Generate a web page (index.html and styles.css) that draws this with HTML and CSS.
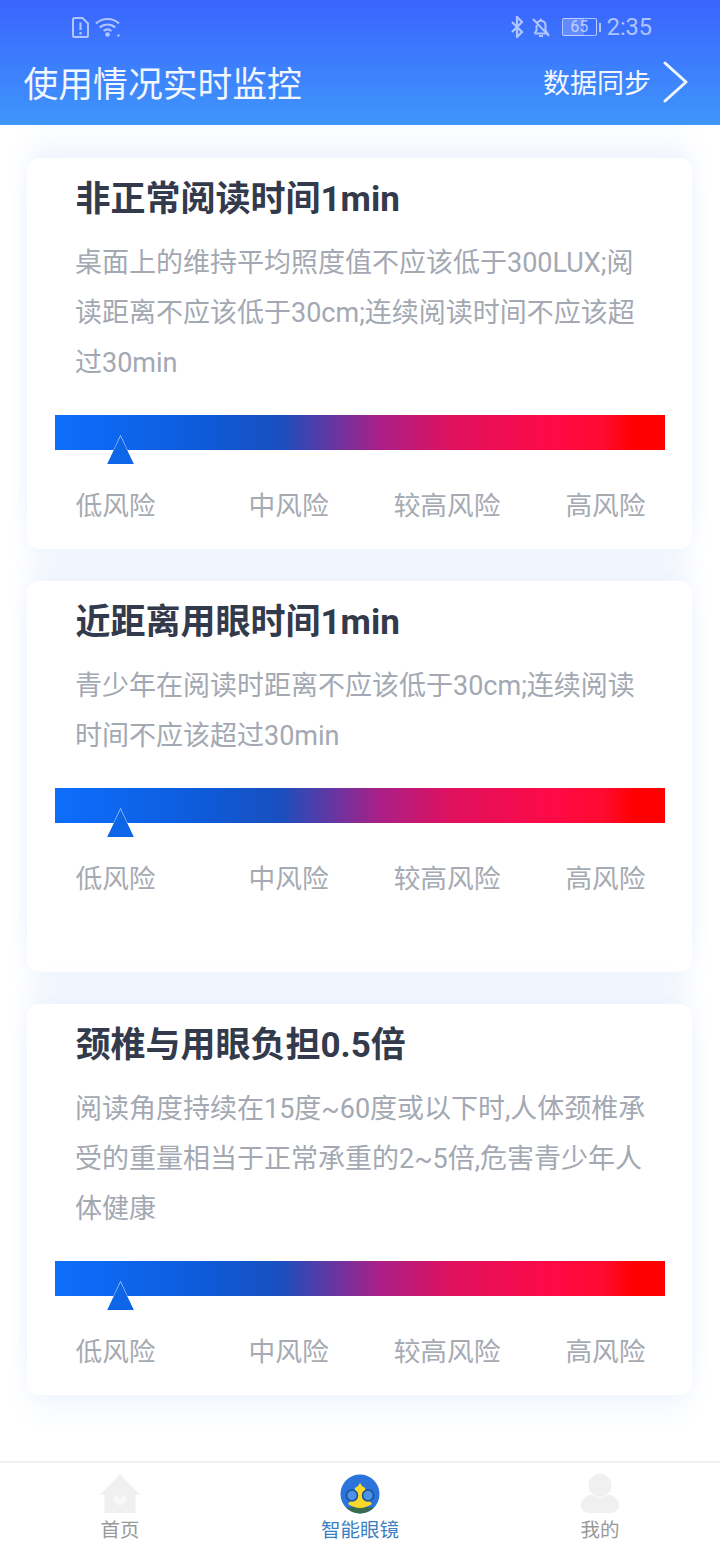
FILE: index.html
```html
<!DOCTYPE html>
<html lang="zh-CN">
<head>
<meta charset="utf-8">
<title>使用情况实时监控</title>
<link rel="stylesheet" href="styles.css">
</head>
<body>
<div class="page">
  <header class="header">
    <div class="status">
      <div class="status-left">
        <svg class="ic-sim" viewBox="0 0 17 21"><path d="M2.500 1h8l5.500 5.500V18.500a1.500 1.500 0 0 1-1.500 1.500H2.500A1.500 1.500 0 0 1 1 18.500V2.500A1.500 1.500 0 0 1 2.500 1z" fill="none" stroke="currentColor" stroke-width="2"/><path d="M8.500 5.500v7.500M8.500 15v2.500" stroke="currentColor" stroke-width="2.200"/></svg>
        <svg class="ic-wifi" viewBox="0 0 26 22"><path d="M1 7.500C7.500 1.500 17.500 1.500 24 7.500M4.800 11.500c4.500-4 10.900-4 15.400 0M8.600 15c2.500-2 5.300-2 7.800 0" fill="none" stroke="currentColor" stroke-width="2.200"/><circle cx="12.500" cy="18.500" r="2.300" fill="currentColor"/><circle cx="23.500" cy="19.500" r="1.200" fill="currentColor"/></svg>
      </div>
      <div class="status-right">
        <svg class="ic-bt" viewBox="0 0 14 22"><path d="M2 6l10 10-5 5V1l5 5L2 16" fill="none" stroke="currentColor" stroke-width="2.200"/></svg>
        <svg class="ic-bell" viewBox="0 0 20 21"><path d="M3.500 16.500h13l-2-3V8.500a4.500 4.500 0 0 0-8-3M5.500 8v5.500l-2 3M8 19h4M9.800 1.500v2M2 2l16 17" fill="none" stroke="currentColor" stroke-width="2"/></svg>
        <span class="battery"><span class="battery-num">65</span></span><span class="battery-tip"></span>
        <span class="clock">2:35</span>
      </div>
    </div>
    <div class="titlebar">
      <h1 class="title">使用情况实时监控</h1>
      <div class="sync">
        <span>数据同步</span>
        <svg class="ic-chevron" viewBox="0 0 26 42"><path d="M2 2l21 19L2 40" fill="none" stroke="currentColor" stroke-width="3" stroke-linecap="round" stroke-linejoin="round"/></svg>
      </div>
    </div>
  </header>

  <main class="content">
    <section class="card">
      <h2 class="card-title">非正常阅读时间1min</h2>
      <p class="card-text">桌面上的维持平均照度值不应该低于300LUX;阅读距离不应该低于30cm;连续阅读时间不应该超过30min</p>
      <div class="meter"><span class="pointer"></span></div>
      <div class="levels"><span class="level-first">低风险</span><span>中风险</span><span>较高风险</span><span>高风险</span></div>
    </section>
    <section class="card">
      <h2 class="card-title">近距离用眼时间1min</h2>
      <p class="card-text card-text-short">青少年在阅读时距离不应该低于30cm;连续阅读时间不应该超过30min</p>
      <div class="meter"><span class="pointer"></span></div>
      <div class="levels"><span class="level-first">低风险</span><span>中风险</span><span>较高风险</span><span>高风险</span></div>
    </section>
    <section class="card">
      <h2 class="card-title">颈椎与用眼负担0.5倍</h2>
      <p class="card-text">阅读角度持续在15度~60度或以下时,人体颈椎承受的重量相当于正常承重的2~5倍,危害青少年人体健康</p>
      <div class="meter"><span class="pointer"></span></div>
      <div class="levels"><span class="level-first">低风险</span><span>中风险</span><span>较高风险</span><span>高风险</span></div>
    </section>
  </main>

  <nav class="tabs">
    <div class="tab">
      <svg class="tab-icon" viewBox="0 0 40 40"><path d="M20 0L0 21h4.500v18h31V21H40z" fill="#f0f0f0"/><path d="M14 24c2-3 5-1 6 1 1-2 4-4 6-1 1.500 3-3 6-6 8-3-2-7.500-5-6-8z" fill="#f8f8f8"/></svg>
      <span>首页</span>
    </div>
    <div class="tab tab-active">
      <svg class="tab-icon" viewBox="0 0 40 40"><defs><clipPath id="round"><circle cx="20" cy="20" r="19.500"/></clipPath></defs><circle cx="20" cy="20" r="19.500" fill="#2a74dc"/><g clip-path="url(#round)"><path d="M4 33c5 1 10 0 16 0s11 1 16 0v8H4z" fill="#3c6c4e"/><path d="M20 9l2 3 3 2 1 8 6 8c-3 2-8 4-12 4s-9-2-12-4l6-8 1-8 3-2z" fill="#fbd92b"/></g><circle cx="12" cy="21.500" r="5.500" fill="#4a93e6" stroke="#1f4f95" stroke-width="1.500"/><circle cx="28" cy="21.500" r="5.500" fill="#4a93e6" stroke="#1f4f95" stroke-width="1.500"/></svg>
      <span>智能眼镜</span>
    </div>
    <div class="tab">
      <svg class="tab-icon" viewBox="0 0 40 40"><circle cx="20" cy="11.500" r="11.500" fill="#f0f0f0"/><path d="M1 31c0-6 5-10 11-10 2 2 5 3 8 3s6-1 8-3c6 0 11 4 11 10 0 4-3 8-7 8H8c-4 0-7-4-7-8z" fill="#f0f0f0"/></svg>
      <span>我的</span>
    </div>
  </nav>
</div>
</body>
</html>
```

FILE: styles.css
```css
* { box-sizing: border-box; }
html, body { margin: 0; padding: 0; background: #fff; }
body { font-family: "Roboto", "Noto Sans CJK SC", "Noto Sans", sans-serif; }
.page { width: 720px; height: 1560px; display: flex; flex-direction: column; overflow: hidden; }

.header { height: 125px; flex: none; padding: 14px 24px 0; color: #fff;
  background: linear-gradient(180deg, #3a64fe 0%, #3f96fb 100%); position: relative; z-index: 1; }
.status { height: 26px; display: flex; justify-content: space-between; align-items: center; color: rgba(255,255,255,.6); }
.status-left { display: flex; align-items: center; gap: 6px; margin-left: 48px; }
.status-right { display: flex; align-items: center; margin-right: 44px; }
.ic-sim { width: 17px; height: 21px; }
.ic-wifi { width: 26px; height: 22px; }
.ic-bt { width: 14px; height: 22px; margin-right: 7px; margin-left: -4px; }
.ic-bell { width: 20px; height: 21px; margin-right: 11px; }
.battery { width: 35px; height: 18px; border: 1px solid currentColor; border-radius: 2px; display: flex; align-items: center; justify-content: center; background: linear-gradient(90deg, rgba(255,255,255,.2) 65%, transparent 65%); }
.battery-num { font-family: "Roboto", sans-serif; font-size: 16px; line-height: 1; }
.battery-tip { width: 2px; height: 9px; margin-left: 2px; margin-right: 6px; background: currentColor; }
.clock { font-family: "Roboto", sans-serif; font-size: 23.500px; line-height: 26px; }

.titlebar { display: flex; justify-content: space-between; align-items: center; height: 62px; margin-top: 10px; }
.title { margin: 7px 0 0 -0.500px; font-size: 34.800px; font-weight: 400; line-height: 50px; color: #f1f6ff; }
.sync { display: flex; align-items: center; gap: 12px; font-size: 27px; color: #f1f6ff; margin: 1px 7px 0 0; }
.ic-chevron { width: 26px; height: 42px; }

.content { flex: 1; padding: 33px 28px 0 27px; display: flex; flex-direction: column; gap: 32px; background: #fff; }
.card { height: 391px; flex: none; border-radius: 12px; background: #fff; padding: 17px 27px 0 28px;
  box-shadow: 0 0 14px rgba(90,130,235,.04), 0 22px 26px -4px rgba(70,130,235,.06), 0 -22px 26px -4px rgba(70,130,235,.07); }
.card-title { margin: 0 0 0 20.500px; font-size: 35px; font-weight: 700; line-height: 50px; color: #333a4c; }
.card-text { margin: 13px 0 0 20px; height: 150px; font-size: 27px; line-height: 50px; color: #a3a8b2; width: 572px; }
.card-text-short { height: 100px; }
.meter { position: relative; height: 35px; margin-top: 27px; background: linear-gradient(90deg, #0d6efd 0%, #0e5ad8 25%, #1a4fbe 37%, #a82088 53%, #e0105f 65%, #ff0a45 82%, #ff0a30 90%, #ff0000 95%, #ff0000 100%); }
.pointer { position: absolute; left: 52px; top: 20px; width: 27px; height: 29px; background: #fff; clip-path: polygon(50% 0, 100% 100%, 0 100%); }
.pointer::after { content: ""; position: absolute; left: 0; right: 0; top: 1px; bottom: 0; background: #0d66e8; clip-path: polygon(50% 0, 100% 100%, 0 100%); }
.levels { display: flex; gap: 65px; margin: 36px 0 0 20.500px; font-size: 26.700px; line-height: 40px; color: #a6aab2; }
.level-first { margin-right: 28px; }

.tabs { height: 99px; flex: none; border-top: 2px solid #f0f0f0; display: grid; grid-template-columns: repeat(3, 240px); background: #fff; position: relative; z-index: 1; }
.tab { display: flex; flex-direction: column; align-items: center; padding-top: 11px; font-size: 19.500px; line-height: 28px; color: #999; }
.tab-icon { width: 40px; height: 40px; display: block; margin-bottom: 3px; }
.tab-active { color: #3d7fc2; }
```
